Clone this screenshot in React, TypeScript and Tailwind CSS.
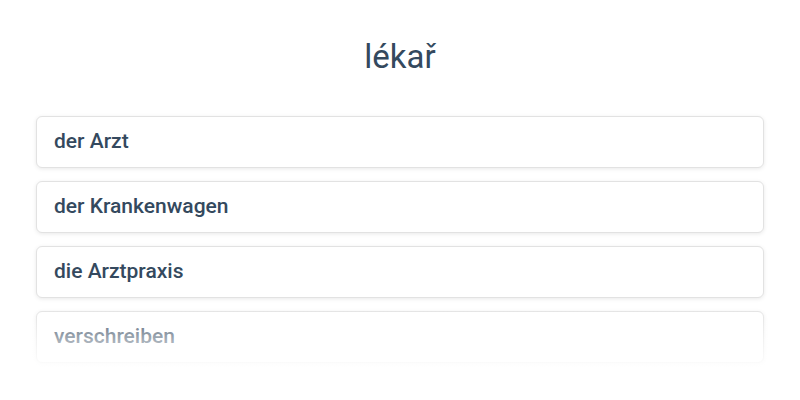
import React from "react";

const words = ["der Arzt", "der Krankenwagen", "die Arztpraxis", "verschreiben"];

export default function App() {
  return (
    <div className="w-[800px] h-[400px] bg-white overflow-hidden" style={{ fontFamily: "Roboto, 'Noto Sans', sans-serif" }}>
      <h1 className="pt-[37px] text-center text-[33px] leading-[40px] font-normal text-[#34495e]">lékař</h1>
      <div className="relative mt-[39px] px-9">
        <div className="flex flex-col gap-[13px]">
          {words.map((w) => (
            <div
              key={w}
              className="h-[52px] flex items-center px-[17px] rounded-md border border-[#e2e2e2] bg-white shadow-[0_1px_4px_rgba(0,0,0,0.09)] text-[21px] font-medium text-[#34495e]"
            >
              {w}
            </div>
          ))}
        </div>
        <div className="pointer-events-none absolute left-0 right-0 top-[190px] h-[68px] bg-gradient-to-b from-white/0 via-white/55 to-white" />
      </div>
    </div>
  );
}
